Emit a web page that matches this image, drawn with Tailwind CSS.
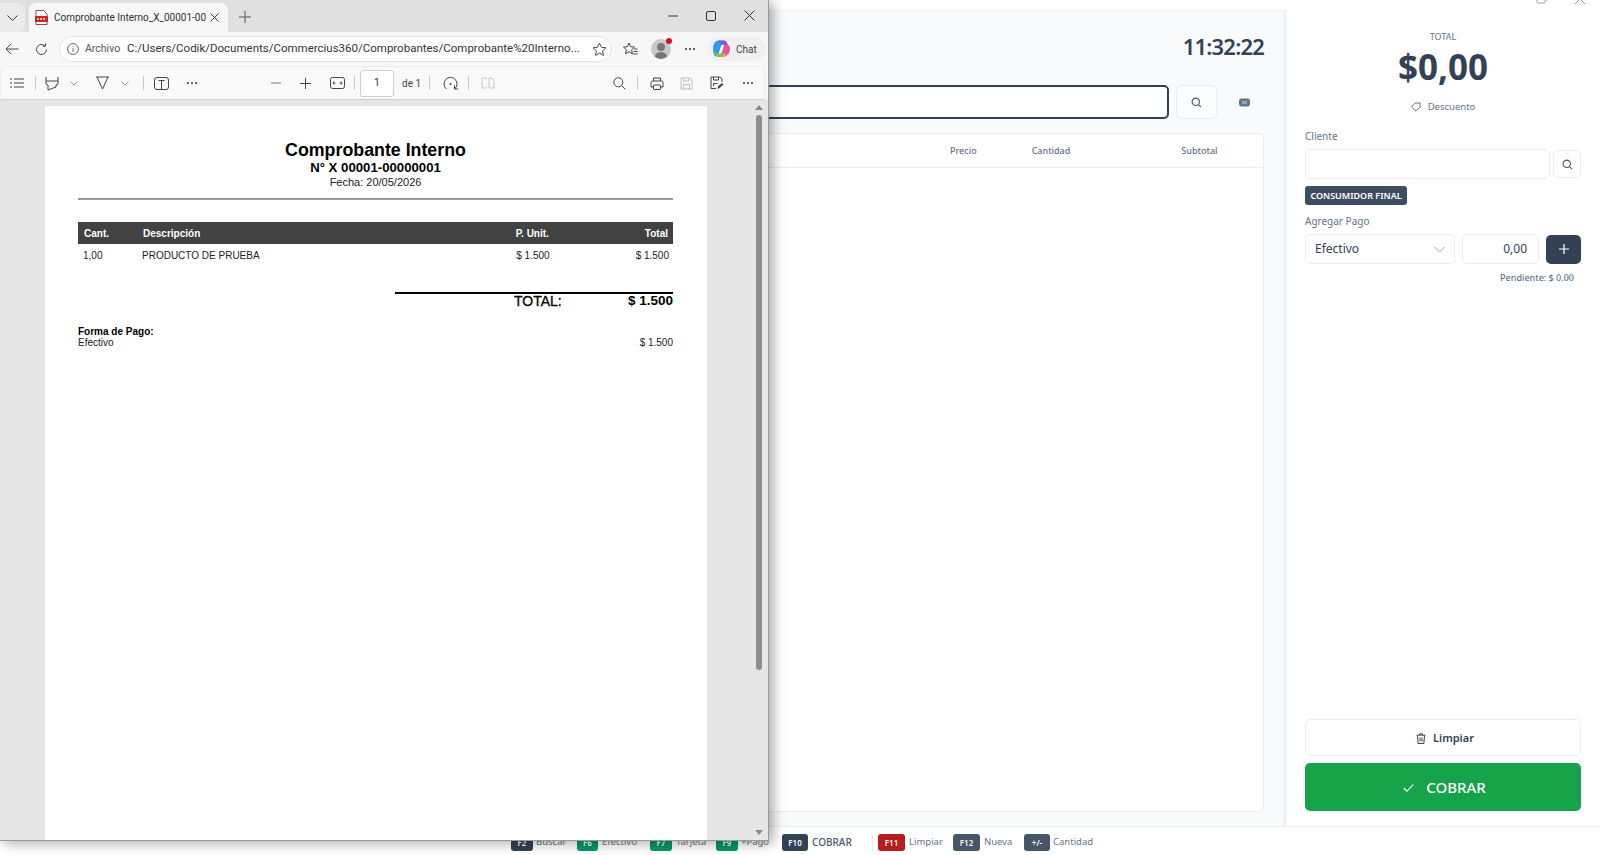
<!DOCTYPE html>
<html lang="es">
<head>
    <meta charset="UTF-8">
    <title>Commercius360 - Comprobante Interno</title>
    <script src="https://cdn.jsdelivr.net/npm/@tailwindcss/browser@4"></script>
</head>
<body class="relative w-[1600px] h-[855px] overflow-hidden bg-white font-['Noto_Sans',sans-serif]">

    <!-- POS app behind the PDF window -->
    <div class="w-[1600px] h-[855px] flex flex-col">
        <div class="h-[10px] shrink-0 overflow-hidden flex justify-end gap-[26px] pr-[14px] bg-white">
            <svg class="w-[12px] h-[12px] -mt-[8px] text-slate-400" viewBox="0 0 12 12" fill="none" stroke="currentColor"><rect x="1" y="3" width="8" height="8" rx="1"/><path d="M3 1h7a1 1 0 0 1 1 1v7"/></svg>
            <svg class="w-[12px] h-[12px] -mt-[7px] text-slate-400" viewBox="0 0 12 12" fill="none" stroke="currentColor"><path d="M1 1l10 10M11 1L1 11"/></svg>
        </div>
        <div class="flex flex-1 min-h-0">
            <main class="flex-1 bg-[#f8fafc] pr-[20px] flex flex-col min-w-0 border-t border-[#eef2f6]">
                <div class="h-[74px] shrink-0 flex justify-end pt-[20px]">
                    <span class="text-[22px] leading-[30px] font-semibold tracking-[-0.8px] text-[#334155]">11:32:22</span>
                </div>
                <div class="flex items-center h-[34px] shrink-0">
                    <div class="flex-1 h-[34px] rounded-[5px] border-2 border-[#334155] bg-white"></div>
                    <button class="ml-[7px] w-[41px] h-[34px] rounded-[5px] border border-[#e8edf3] bg-[#fbfcfd] flex items-center justify-center">
                        <svg class="w-[11px] h-[11px] text-[#475569]" viewBox="0 0 12 12" fill="none" stroke="currentColor" stroke-width="1.2"><circle cx="5.2" cy="5.2" r="4"/><path d="M8.2 8.2L11 11"/></svg>
                    </button>
                    <div class="w-[47px] flex justify-center pl-[7px]">
                        <svg class="w-[11px] h-[9px]" viewBox="0 0 11 9"><rect width="11" height="8" y=".5" rx="2.4" fill="#64748b"/><path d="M3 3l5 3M8 3L3 6" stroke="#dbe2ea" stroke-width=".8" fill="none"/></svg>
                    </div>
                </div>
                <div class="mt-[14px] mb-[14px] flex-1 rounded-[4px] border border-[#e9eef4] bg-white flex flex-col">
                    <div class="h-[34px] border-b border-[#e9eef4] flex items-center text-[9px] font-medium text-[#667085]">
                        <span class="ml-[949px]">Precio</span>
                        <span class="ml-[55px]">Cantidad</span>
                        <span class="ml-[111px]">Subtotal</span>
                    </div>
                </div>
            </main>
            <aside class="w-[316px] shrink-0 border-l-2 border-[#e9eff6] bg-white pl-[19px] pr-[19px] flex flex-col">
                <div class="text-center text-[9px] leading-[12px] text-[#64748b] mt-[21px]">TOTAL</div>
                <div class="text-center text-[35px] leading-[46px] font-bold text-[#334155] mt-[1px]">$0,00</div>
                <div class="flex items-center justify-center gap-[7px] mt-[10px] text-[9.5px] leading-[14px] text-[#64748b]">
                    <svg class="w-[10px] h-[10px]" viewBox="0 0 12 12" fill="none" stroke="currentColor" stroke-width="1.2"><path d="M5 1.2h5.8v5L6 11 1.2 6.5V5z"/></svg>
                    <span>Descuento</span>
                </div>
                <div class="text-[10px] leading-[14px] text-[#64748b] mt-[15px]">Cliente</div>
                <div class="flex items-center mt-[6px]">
                    <div class="w-[245px] h-[30px] rounded-[5px] border border-[#e9eef4]"></div>
                    <button class="ml-[3px] w-[28px] h-[28px] rounded-[5px] border border-[#e9eef4] flex items-center justify-center">
                        <svg class="w-[11px] h-[11px] text-[#475569]" viewBox="0 0 12 12" fill="none" stroke="currentColor" stroke-width="1.2"><circle cx="5.2" cy="5.2" r="4"/><path d="M8.2 8.2L11 11"/></svg>
                    </button>
                </div>
                <div class="mt-[7px] w-[102px] h-[19px] rounded-[3px] bg-[#3f4d63] text-white text-[9px] font-semibold flex items-center justify-center">CONSUMIDOR FINAL</div>
                <div class="text-[10px] leading-[14px] text-[#64748b] mt-[9px]">Agregar Pago</div>
                <div class="flex items-center mt-[6px]">
                    <div class="w-[150px] h-[30px] rounded-[5px] border border-[#e9eef4] flex items-center justify-between pl-[9px] pr-[9px] text-[12px] text-[#334155]">
                        <span>Efectivo</span>
                        <svg class="w-[11px] h-[7px] text-[#94a3b8]" viewBox="0 0 11 7" fill="none" stroke="currentColor"><path d="M.5 1l5 5 5-5"/></svg>
                    </div>
                    <div class="ml-[7px] w-[77px] h-[30px] rounded-[5px] border border-[#e9eef4] flex items-center justify-end pr-[11px] text-[12px] text-[#334155]">0,00</div>
                    <button class="ml-[7px] w-[35px] h-[29px] rounded-[5px] bg-[#334155] flex items-center justify-center">
                        <svg class="w-[10px] h-[10px] text-white" viewBox="0 0 10 10" fill="none" stroke="currentColor" stroke-width="1.2"><path d="M5 0v10M0 5h10"/></svg>
                    </button>
                </div>
                <div class="text-right text-[9px] leading-[14px] font-medium text-[#64748b] mt-[7px] pr-[7px]">Pendiente: $ 0.00</div>
                <div class="flex-1"></div>
                <button class="h-[37px] pl-[4px] pt-[1px] rounded-[5px] border border-[#e9eef4] flex items-center justify-center gap-[7px] text-[11px] font-semibold text-[#334155]">
                    <svg class="w-[10px] h-[11px]" viewBox="0 0 10 11" fill="none" stroke="currentColor" stroke-width="1"><path d="M.5 2.200h9M3.500 2V.8h3V2M1.500 2.500l.6 8h5.800l.6-8M4 4.500v4M6 4.500v4"/></svg>
                    <span>Limpiar</span>
                </button>
                <button class="mt-[7px] mb-[15px] h-[48px] pl-[3px] pt-[1px] rounded-[5px] bg-[#16a34a] flex items-center justify-center gap-[12px] text-[15px] font-medium text-white">
                    <svg class="w-[11px] h-[8px]" viewBox="0 0 11 8" fill="none" stroke="currentColor" stroke-width="1.1"><path d="M.7 4l3.2 3.2L10.300.7"/></svg>
                    <span>COBRAR</span>
                </button>
            </aside>
        </div>
        <footer class="h-[29px] shrink-0 border-t border-[#e9eef4] bg-white flex items-center pl-[511px] pt-[3px] text-[9.5px] text-[#64748b]">
            <span class="w-[22px] h-[17px] rounded-[3px] bg-[#334155] text-white text-[8px] font-semibold flex items-center justify-center">F2</span><span class="ml-[3px] w-[41px]">Buscar</span>
            <span class="w-[21px] h-[17px] rounded-[3px] bg-[#059669] text-white text-[8px] font-semibold flex items-center justify-center">F6</span><span class="ml-[4px] w-[48px]">Efectivo</span>
            <span class="w-[22px] h-[17px] rounded-[3px] bg-[#059669] text-white text-[8px] font-semibold flex items-center justify-center">F7</span><span class="ml-[4px] w-[40px]">Tarjeta</span>
            <span class="w-[22px] h-[17px] rounded-[3px] bg-[#059669] text-white text-[8px] font-semibold flex items-center justify-center">F9</span><span class="ml-[3px] w-[41px]">+Pago</span>
            <span class="w-[26px] h-[17px] rounded-[3px] bg-[#334155] text-white text-[8px] font-semibold flex items-center justify-center">F10</span><span class="ml-[4px] w-[60px] text-[10px] font-medium text-[#475569]">COBRAR</span>
            <span class="w-px h-[17px] bg-[#e9eef4]"></span>
            <span class="ml-[5px] w-[27px] h-[17px] rounded-[3px] bg-[#b91c1c] text-white text-[8px] font-semibold flex items-center justify-center">F11</span><span class="ml-[4px] w-[44px]">Limpiar</span>
            <span class="w-[27px] h-[17px] rounded-[3px] bg-[#475569] text-white text-[8px] font-semibold flex items-center justify-center">F12</span><span class="ml-[4px] w-[40px]">Nueva</span>
            <span class="w-[26px] h-[17px] rounded-[3px] bg-[#475569] text-white text-[8px] font-semibold flex items-center justify-center">+/-</span><span class="ml-[3px]">Cantidad</span>
        </footer>
    </div>

    <!-- Edge PDF window on top -->
    <div class="absolute left-0 top-0 w-[769px] h-[841px] flex flex-col bg-[#f7f7f7] border-r border-b border-[#9a9a9a] shadow-[4px_2px_12px_rgba(0,0,0,0.35)] font-['Roboto',sans-serif]">
        <!-- tab strip -->
        <div class="h-[32px] shrink-0 bg-[#e0e0e0] flex items-end">
            <div class="w-[25px] h-[29px] bg-[#ebebeb] rounded-r-[6px] flex items-center justify-center">
                <svg class="w-[11px] h-[6px] text-[#333]" viewBox="0 0 11 6" fill="none" stroke="currentColor"><path d="M.5.5l5 5 5-5"/></svg>
            </div>
            <div class="ml-[4px] w-[199px] h-[29px] bg-[#f7f7f7] rounded-t-[7px] flex items-center pl-[6px]">
                <svg class="w-[13px] h-[15px]" viewBox="0 0 13 15"><path d="M1 .5h7.500L12 4v10.500H1z" fill="#fff" stroke="#7a3a3a" stroke-width=".9"/><rect y="6" width="13" height="6" rx="1" fill="#c62828"/><path d="M2 9h9" stroke="#f3b9b9" stroke-width="2" stroke-dasharray="2 1"/></svg>
                <span class="ml-[6px] w-[153px] overflow-hidden whitespace-nowrap text-[10px] text-[#333]">Comprobante Interno_X_00001-00</span>
                <svg class="ml-[3px] w-[9px] h-[9px] text-[#333]" viewBox="0 0 9 9" fill="none" stroke="currentColor"><path d="M.5.5l8 8M8.500.5l-8 8"/></svg>
            </div>
            <svg class="ml-[11px] mb-[9px] w-[12px] h-[12px] text-[#555]" viewBox="0 0 12 12" fill="none" stroke="currentColor"><path d="M6 0v12M0 6h12"/></svg>
            <div class="flex-1"></div>
            <div class="flex items-center pb-[11px] pr-[13px] gap-[28px]">
                <svg class="w-[10px] h-[10px] text-[#333]" viewBox="0 0 10 10" fill="none" stroke="currentColor"><path d="M0 5h10"/></svg>
                <svg class="w-[10px] h-[10px] text-[#333]" viewBox="0 0 10 10" fill="none" stroke="currentColor"><rect x=".5" y=".5" width="9" height="9" rx="1.500"/></svg>
                <svg class="w-[11px] h-[11px] text-[#333]" viewBox="0 0 11 11" fill="none" stroke="currentColor"><path d="M.5.5l10 10M10.500.5l-10 10"/></svg>
            </div>
        </div>
        <!-- address bar -->
        <div class="h-[34px] shrink-0 flex items-center bg-[#f7f7f7]">
            <svg class="ml-[5px] w-[14px] h-[12px] text-[#444]" viewBox="0 0 14 12" fill="none" stroke="currentColor"><path d="M13.500 6H1M6 1L1 6l5 5"/></svg>
            <svg class="ml-[16px] w-[13px] h-[13px] text-[#444]" viewBox="0 0 13 13" fill="none" stroke="currentColor"><path d="M11.500 6.500a5 5 0 1 1-1.600-3.700M10.500.5v2.700H7.800"/></svg>
            <div class="ml-[11px] w-[553px] h-[26px] rounded-full bg-white border border-[#e3e3e3] flex items-center pl-[7px]">
                <svg class="shrink-0 w-[12px] h-[12px] text-[#555]" viewBox="0 0 12 12" fill="none" stroke="currentColor" stroke-width=".9"><circle cx="6" cy="6" r="5.400"/><path d="M6 5.200v3.600M6 3v1"/></svg>
                <span class="ml-[6px] w-[35px] text-[10.5px] text-[#555]">Archivo</span>
                <span class="ml-[7px] flex-1 whitespace-nowrap text-[11.500px] text-[#333]">C:/Users/Codik/Documents/Commercius360/Comprobantes/Comprobante%20Interno...</span>
                <svg class="shrink-0 mr-[4px] w-[15px] h-[15px] text-[#444]" viewBox="0 0 14 14" fill="none" stroke="currentColor" stroke-width=".9"><path d="M7 1l1.800 3.900 4.200.5-3.100 2.900.8 4.200L7 10.400l-3.700 2.100.8-4.200L1 5.400l4.200-.5z"/></svg>
            </div>
            <svg class="ml-[11px] w-[15px] h-[14px] text-[#333]" viewBox="0 0 15 14" fill="none" stroke="currentColor" stroke-width=".9"><path d="M6 1l1.600 3.700 3.900.4-2.900 2.700.8 4L6 9.800 2.600 11.800l.8-4L.5 5.100l3.900-.4zM11 7h3.500M10.500 9.500h4M10 12h4.500"/></svg>
            <div class="ml-[13px] relative w-[20px] h-[20px]">
                <div class="w-[20px] h-[20px] rounded-full bg-[#c8c8c8] overflow-hidden">
                    <div class="mx-auto mt-[4px] w-[8px] h-[8px] rounded-full bg-[#777]"></div>
                    <div class="mx-auto mt-[1px] w-[14px] h-[8px] rounded-t-full bg-[#777]"></div>
                </div>
                <div class="absolute -right-[1px] -top-[1px] w-[6px] h-[6px] rounded-full bg-[#d01030]"></div>
            </div>
            <div class="ml-[14px] flex gap-[2px]"><i class="block w-[2px] h-[2px] rounded-full bg-[#333]"></i><i class="block w-[2px] h-[2px] rounded-full bg-[#333]"></i><i class="block w-[2px] h-[2px] rounded-full bg-[#333]"></i></div>
            <div class="ml-[13px] w-[58px] h-[24px] rounded-full bg-[#f0f0f0] flex items-center pl-[3px]">
                <svg class="w-[20px] h-[20px]" viewBox="0 0 19 19">
                    <path d="M2 9.500C2 4.500 4 1.500 8 1.500h4L9 9l-2 7.500H5C3 16.500 2 13.500 2 9.500z" fill="#2d9be8"/>
                    <path d="M7 1.500h5c2 0 3 1 3.500 3L16.500 7 10 8z" fill="#7c5bd6"/>
                    <path d="M16 5.500c2 1 2.500 3.500 2 5.500-.7 3-3 6-7 6H6l4-4 2-7z" fill="#e4569a"/>
                    <path d="M2.500 12c1 3 3 5 5.500 5h4l2.500-3H8z" fill="#7cc24a"/>
                    <path d="M12 14.500h3L13 17h-3z" fill="#f2a33a"/>
                    <path d="M7.500 13.500l2.500-8h2.500l-2.500 8z" fill="#fff"/>
                </svg>
                <span class="ml-[5px] text-[10px] text-[#444]">Chat</span>
            </div>
        </div>
        <!-- pdf toolbar -->
        <div class="h-[34px] shrink-0 rounded-t-[6px] bg-[#f9f9f9] border border-[#ececec] border-b-[#d0d0d0] mr-[3px] flex items-center text-[#444]">
            <svg class="ml-[9px] w-[14px] h-[10px]" viewBox="0 0 14 10" fill="none" stroke="currentColor"><path d="M0 1h2M4 1h10M0 5h2M4 5h10M0 9h2M4 9h10"/></svg>
            <i class="ml-[11px] block w-px h-[14px] bg-[#c8c8c8]"></i>
            <svg class="ml-[9px] w-[14px] h-[15px]" viewBox="0 0 14 15" fill="none" stroke="currentColor"><path d="M1 1v7l2 1v5l8-3V9l2-1V1M1 5h12"/></svg>
            <svg class="ml-[11px] w-[8px] h-[5px] text-[#999]" viewBox="0 0 8 5" fill="none" stroke="currentColor"><path d="M.5.5L4 4 7.500.5"/></svg>
            <svg class="ml-[17px] w-[15px] h-[14px]" viewBox="0 0 15 14" fill="none" stroke="currentColor"><path d="M1 1h13M2 1l5.500 12L13 1"/></svg>
            <svg class="ml-[11px] w-[8px] h-[5px] text-[#999]" viewBox="0 0 8 5" fill="none" stroke="currentColor"><path d="M.5.500L4 4 7.500.5"/></svg>
            <i class="ml-[14px] block w-px h-[14px] bg-[#c8c8c8]"></i>
            <svg class="ml-[10px] w-[15px] h-[13px]" viewBox="0 0 15 13" fill="none" stroke="currentColor"><rect x=".5" y=".5" width="14" height="12" rx="2.500"/><path d="M4.500 3.500h6M7.500 3.500v9"/></svg>
            <div class="ml-[18px] flex gap-[2px]"><i class="block w-[2px] h-[2px] rounded-full bg-[#333]"></i><i class="block w-[2px] h-[2px] rounded-full bg-[#333]"></i><i class="block w-[2px] h-[2px] rounded-full bg-[#333]"></i></div>
            <svg class="ml-[74px] w-[10px] h-[2px] text-[#777]" viewBox="0 0 10 2" fill="none" stroke="currentColor"><path d="M0 1h10"/></svg>
            <svg class="ml-[19px] w-[11px] h-[11px]" viewBox="0 0 11 11" fill="none" stroke="currentColor"><path d="M5.500 0v11M0 5.500h11"/></svg>
            <svg class="ml-[19px] w-[15px] h-[12px]" viewBox="0 0 15 12" fill="none" stroke="currentColor"><rect x=".5" y=".5" width="14" height="11" rx="2"/><path d="M3 6h2.500M9.500 6H12M4 4.500L3 6l1 1.500M11 4.500L12 6l-1 1.500"/></svg>
            <i class="ml-[9px] block w-px h-[14px] bg-[#c8c8c8]"></i>
            <div class="ml-[5px] w-[34px] h-[27px] rounded-[3px] border border-[#cfcfcf] bg-white flex items-center justify-center text-[10.5px] text-[#333]">1</div>
            <span class="ml-[8px] text-[10px] text-[#444]">de 1</span>
            <i class="ml-[8px] block w-px h-[14px] bg-[#c8c8c8]"></i>
            <svg class="ml-[13px] w-[15px] h-[15px]" viewBox="0 0 15 15" fill="none" stroke="currentColor"><path d="M3.500 13A6.500 6.500 0 1 1 11.500 13M11.500 9.500V13H15"/><circle cx="7.500" cy="8" r="1" fill="currentColor" stroke="none"/></svg>
            <i class="ml-[10px] block w-px h-[14px] bg-[#c8c8c8]"></i>
            <svg class="ml-[12px] w-[14px] h-[12px] text-[#c4c4c4]" viewBox="0 0 14 12" fill="none" stroke="currentColor"><path d="M6 1H2a1 1 0 0 0-1 1v8a1 1 0 0 0 1 1h4M8 1h3l2 2v8H8V1"/></svg>
            <svg class="ml-[118px] w-[13px] h-[13px]" viewBox="0 0 13 13" fill="none" stroke="currentColor"><circle cx="5.300" cy="5.300" r="4.500"/><path d="M8.600 8.600L12.500 12.500"/></svg>
            <i class="ml-[11px] block w-px h-[14px] bg-[#c8c8c8]"></i>
            <svg class="ml-[12px] w-[14px] h-[13px]" viewBox="0 0 14 13" fill="none" stroke="currentColor"><path d="M3.500 4V1h7v3M3.500 10H1V5.500A1.500 1.500 0 0 1 2.500 4h9A1.500 1.500 0 0 1 13 5.500V10h-2.500"/><rect x="3.500" y="8" width="7" height="4.500" rx=".5"/></svg>
            <svg class="ml-[16px] w-[13px] h-[13px] text-[#c0c0c0]" viewBox="0 0 13 13" fill="none" stroke="currentColor"><path d="M1 1h9l2 2v9H1zM3.500 1v3h5V1M3.500 12V7.500h6V12"/></svg>
            <svg class="ml-[17px] w-[14px] h-[14px]" viewBox="0 0 14 14" fill="none" stroke="currentColor"><path d="M6 12.500H1V1h9l2 2v3M3.500 1v3h5V1M3.500 10V7.500h4"/><path d="M7.500 13l.5-2.500 4-3.500 1.500 1.500-4 3.500z" fill="currentColor" stroke="none"/></svg>
            <div class="ml-[19px] flex gap-[2px]"><i class="block w-[2px] h-[2px] rounded-full bg-[#333]"></i><i class="block w-[2px] h-[2px] rounded-full bg-[#333]"></i><i class="block w-[2px] h-[2px] rounded-full bg-[#333]"></i></div>
        </div>
        <!-- pdf viewer -->
        <div class="relative flex-1 min-h-0 bg-[#e6e6e6] overflow-hidden">
            <div class="absolute left-[45px] top-[6px] w-[662px] h-[800px] bg-white font-['Liberation_Sans',sans-serif] text-black pl-[33px] pr-[34px]">
                <div class="text-center font-bold text-[17.8px] leading-[22px] mt-[33px]">Comprobante Interno</div>
                <div class="text-center font-bold text-[13.200px] leading-[15px] -mt-[1px]">N° X 00001-00000001</div>
                <div class="text-center text-[11px] leading-[13px] mt-[1px] text-[#222]">Fecha: 20/05/2026</div>
                <div class="h-[2px] bg-[#999] mt-[9px]"></div>
                <div class="mt-[22px] h-[22px] bg-[#424242] text-white font-bold text-[10px] flex items-center pl-[6px] pr-[5px]">
                    <span class="w-[59px]">Cant.</span>
                    <span class="flex-1">Descripción</span>
                    <span class="mr-[96px]">P. Unit.</span>
                    <span>Total</span>
                </div>
                <div class="h-[22px] text-[10px] text-[#222] flex items-center pl-[5px] pr-[4px]">
                    <span class="w-[59px]">1,00</span>
                    <span class="flex-1">PRODUCTO DE PRUEBA</span>
                    <span class="mr-[86px]">$ 1.500</span>
                    <span>$ 1.500</span>
                </div>
                <div class="ml-[317px] mt-[26px] border-t-2 border-black flex items-center justify-between h-[16px] font-bold text-[13.500px]">
                    <span class="ml-[119px] font-normal text-[14px] [-webkit-text-stroke:0.3px_black]">TOTAL:</span>
                    <span>$ 1.500</span>
                </div>
                <div class="mt-[18px] font-bold text-[10px] leading-[11px]">Forma de Pago:</div>
                <div class="flex justify-between text-[10px] leading-[11px] text-[#222]">
                    <span>Efectivo</span>
                    <span>$ 1.500</span>
                </div>
            </div>
            <!-- scrollbar -->
            <svg class="absolute left-[755px] top-[5px] w-[8px] h-[5px] text-[#888]" viewBox="0 0 8 5" fill="currentColor"><path d="M4 0l4 5H0z"/></svg>
            <div class="absolute left-[756px] top-[15px] w-[6px] h-[555px] rounded-full bg-[#8f8f8f]"></div>
            <svg class="absolute left-[755px] top-[730px] w-[8px] h-[5px] text-[#888]" viewBox="0 0 8 5" fill="currentColor"><path d="M4 5l4-5H0z"/></svg>
        </div>
    </div>

</body>
</html>
